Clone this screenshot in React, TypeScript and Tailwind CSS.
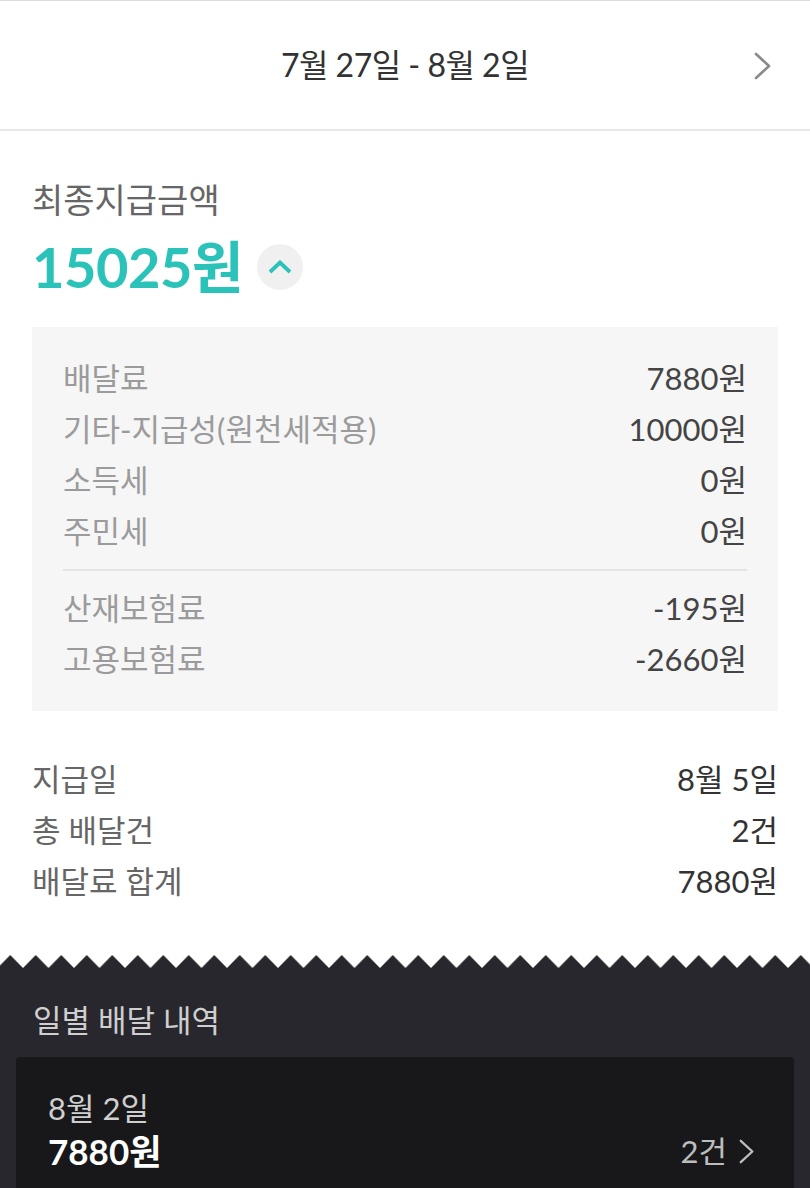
const font = { fontFamily: "Lato, 'Noto Sans CJK KR', sans-serif" };

const breakdown = [
  { label: "배달료", value: "7880원" },
  { label: "기타-지급성(원천세적용)", value: "10000원" },
  { label: "소득세", value: "0원" },
  { label: "주민세", value: "0원" },
];

const insurance = [
  { label: "산재보험료", value: "-195원" },
  { label: "고용보험료", value: "-2660원" },
];

const summary = [
  { label: "지급일", value: "8월 5일" },
  { label: "총 배달건", value: "2건" },
  { label: "배달료 합계", value: "7880원" },
];

function Chevron({ className, color }: { className?: string; color: string }) {
  return (
    <svg className={className} viewBox="0 0 18 28" fill="none">
      <polyline points="2,2 15,14 2,26" stroke={color} strokeWidth="2.6" strokeLinecap="round" strokeLinejoin="round" />
    </svg>
  );
}

function Zigzag() {
  return (
    <svg className="block w-full h-[13px]" preserveAspectRatio="none">
      <defs>
        <pattern id="zz" width="25.5" height="13" patternUnits="userSpaceOnUse" x="-2.5">
          <path d="M0 13 L12.75 0 L25.5 13 Z" fill="#28272d" />
        </pattern>
      </defs>
      <rect width="100%" height="13" fill="url(#zz)" />
    </svg>
  );
}

export default function App() {
  return (
    <div className="w-[810px] h-[1188px] overflow-hidden bg-white" style={font}>
      <header className="relative flex items-center justify-center h-[131px] border-t border-[#dcdcdc] border-b-2 border-b-[#e8e8e8]">
        <span className="text-[32px] text-[#333] tracking-[-0.5px]">7월 27일 - 8월 2일</span>
        <Chevron className="absolute right-[38px] top-[51px] w-[18px] h-[28px]" color="#8a8a8a" />
      </header>

      <section className="px-[32px] pt-[49px]">
        <p className="text-[34px] leading-[40px] text-[#666]">최종지급금액</p>
        <div className="flex items-center gap-[14px] mt-[17px]">
          <span className="text-[56px] leading-[60px] font-bold text-[#2bc2b9] tracking-[-0.5px]">15025원</span>
          <span className="flex items-center justify-center w-[46px] h-[46px] rounded-full bg-[#f0f0f0]">
            <svg className="w-[24px] h-[14px]" viewBox="0 0 24 14" fill="none">
              <polyline points="2,12 12,2.5 22,12" stroke="#2bc2b9" strokeWidth="3.8" />
            </svg>
          </span>
        </div>

        <div className="mt-[30px] bg-[#f6f6f6] px-[31px] py-[26px]">
          {breakdown.map((r) => (
            <div key={r.label} className="flex justify-between text-[31px] leading-[51px]">
              <span className="text-[#9b9b9b]">{r.label}</span>
              <span className="text-[#444]">{r.value}</span>
            </div>
          ))}
          <div className="my-[12px] h-[2px] bg-[#e4e4e4]" />
          {insurance.map((r) => (
            <div key={r.label} className="flex justify-between text-[31px] leading-[51px]">
              <span className="text-[#9b9b9b]">{r.label}</span>
              <span className="text-[#444]">{r.value}</span>
            </div>
          ))}
        </div>

        <div className="mt-[43px]">
          {summary.map((r) => (
            <div key={r.label} className="flex justify-between text-[31px] leading-[51px]">
              <span className="text-[#666]">{r.label}</span>
              <span className="text-[#333]">{r.value}</span>
            </div>
          ))}
        </div>
      </section>

      <div className="mt-[48px]">
        <Zigzag />
        <div className="bg-[#28272d] px-[16px] pt-[32px] h-[300px]">
          <p className="px-[17px] text-[31px] leading-[40px] text-[#cfcfcf]">일별 배달 내역</p>
          <div className="mt-[17px] rounded-[4px] bg-[#18181a] px-[32px] pt-[32px] pb-[30px]">
            <p className="text-[31px] leading-[38px] text-[#cfcfcf]">8월 2일</p>
            <div className="flex items-center justify-between">
              <span className="text-[35px] leading-[48px] font-bold text-white">7880원</span>
              <span className="flex items-center gap-[12px] text-[31px] text-[#bdbdbd]">
                2건
                <Chevron className="w-[16px] h-[25px] mr-[7px]" color="#bdbdbd" />
              </span>
            </div>
          </div>
        </div>
      </div>
    </div>
  );
}
